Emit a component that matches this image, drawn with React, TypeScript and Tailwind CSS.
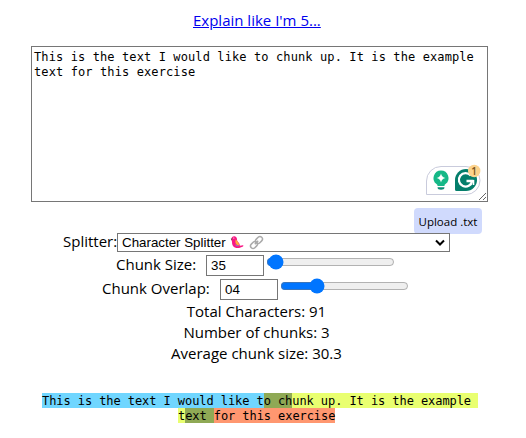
import React from 'react';

const ui = "font-['Open_Sans','Noto_Sans',sans-serif] text-[15px] whitespace-nowrap";
const mono = "font-['DejaVu_Sans_Mono',monospace]";

function Assistant() {
  return (
    <svg className="absolute left-[394px] top-[118px]" width="56" height="34" viewBox="0 0 56 34">
      <path d="M16 2.500h25a14 14 0 0 1 0 28H1.500V17A14.500 14.500 0 0 1 16 2.500z" fill="#fff" stroke="#c9cbdc" strokeWidth="1" />
      <path d="M16 6.500a7.500 7.500 0 0 1 4.500 13.500c-.8.600-1 1-1 2h-7c0-1-.2-1.400-1-2A7.500 7.500 0 0 1 16 6.500z" fill="#15b887" />
      <path d="M12.500 23.300h7c0 1.800-1.500 2.500-3.500 2.500s-3.500-.7-3.500-2.500z" fill="#0b8c75" />
      <path d="M16 9.500q.8 3.700 4.500 4.500-3.700.8-4.500 4.500-.8-3.700-4.500-4.500 3.700-.8 4.500-4.500z" fill="#fff" />
      <path d="M41 5a11 11 0 0 1 0 22H31.500a1.500 1.500 0 0 1-1.500-1.500V16A11 11 0 0 1 41 5z" fill="#047e6b" />
      <path d="M45.800 11.600A6.700 6.700 0 1 0 47.200 17H41.500" fill="none" stroke="#fff" strokeWidth="2.300" />
      <path d="M44.300 16.800h4.200v4.200" fill="none" stroke="#fff" strokeWidth="1.600" />
      <circle cx="49.200" cy="7" r="6.200" fill="#fbd28c" />
      <text x="49.200" y="10.600" textAnchor="middle" fontFamily="Open Sans" fontSize="10" fontWeight="600" fill="#77521c">1</text>
    </svg>
  );
}

function Parrot() {
  return (
    <svg width="14" height="15" viewBox="0 0 14 15">
      <path d="M1.500 4C1.500 2 2.800 1 4.500 1.200c2 .2 2.500 1.800 2.500 3.300 0 2 1.500 2.500 2.300 4 .4.800.5 1.500.5 2.300l3.200-.5c.5 0 .6.800 0 1.100-1.800 1-4.200 1.900-6.700 1.500C3.300 12.400 1.800 10 2 7z" fill="#f81784" />
      <path d="M5.800 4.200C7.300 6.500 9.200 7.800 9.300 10.300 7 10.600 4.300 8.500 5.800 4.200z" fill="#ffab38" />
      <path d="M5 8.900c1.200 1.100 2.400 1.600 4.200 1.500-.5.900-1.300 1.100-2.200.8-.9-.3-1.800-1-2-2.300z" fill="#6e9bc9" />
      <path d="M.8 3.400l1.700.2-1 2.100z" fill="#65484c" />
      <circle cx="3.800" cy="3" r=".6" fill="#fff" />
    </svg>
  );
}

function LinkIcon() {
  return (
    <svg width="15" height="15" viewBox="0 0 15 15" fill="none" stroke="#aaa" strokeWidth="1.500">
      <rect x="-3.800" y="-2.500" width="7.600" height="5" rx="2.500" transform="translate(5 10) rotate(-45)" />
      <rect x="-3.800" y="-2.500" width="7.600" height="5" rx="2.500" transform="translate(10 5) rotate(-45)" />
      <path d="M5.800 9.200l3.400-3.400" />
    </svg>
  );
}

function NumberBox({ value }: { value: string }) {
  return (
    <input
      defaultValue={value}
      className="h-[21px] w-[58px] border border-[#767676] bg-white px-1 font-['Liberation_Sans',Arial,sans-serif] text-[13.333px] text-black"
    />
  );
}

export default function App() {
  return (
    <div className="h-[438px] w-[526px] overflow-hidden bg-white text-black">
      <div className="flex h-[46px] pl-[193px] pt-[9px]">
        <a className={`${ui} h-[22px] leading-[22px] text-[#0000ee] underline`}>Explain like I'm 5...</a>
      </div>
      <div className="relative ml-[31px] h-[156px] w-[457px]">
        <textarea
          className={`${mono} block h-full w-full resize overflow-hidden border border-[#767676] bg-white px-[2px] pt-[3px] text-[12px] leading-[15px] tracking-[0.108px] text-black`}
          defaultValue="This is the text I would like to chunk up. It is the example text for this exercise"
        />
        <Assistant />
      </div>
      <div className="ml-[414px] mt-[6px] flex h-[26px] w-[68px] items-center justify-center rounded-[4px] bg-[#d0dafd] pt-px font-['Open_Sans',sans-serif] text-[11.500px] whitespace-nowrap">
        Upload .txt
      </div>
      <div className="relative -mt-px ml-[63px] flex h-[19px]">
        <span className={`${ui} w-[54px] leading-[17px]`}>Splitter:</span>
        <div className="flex h-[19px] w-[333px] items-center border border-[#767676] bg-white pl-1 font-['Liberation_Sans',Arial,sans-serif] text-[13.333px] whitespace-nowrap">
          <span className="w-[108px]">Character Splitter</span>
          <Parrot />
          <span className="w-[5px]" />
          <LinkIcon />
          <svg className="ml-auto mr-[4px]" width="10" height="8" viewBox="0 0 10 8">
            <path d="M1 1.500l4 4 4-4" fill="none" stroke="#000" strokeWidth="2" />
          </svg>
        </div>
      </div>
      <div className="ml-[116px] mt-[3px] flex h-[21px]">
        <span className={`${ui} w-[90px] leading-[19px]`}>Chunk Size:</span>
        <NumberBox value="35" />
        <input type="range" defaultValue={2} className="-mt-px ml-[2px] h-4 w-[129px]" />
      </div>
      <div className="ml-[102px] mt-[3px] flex h-[21px]">
        <span className={`${ui} w-[118px] leading-[19px]`}>Chunk Overlap:</span>
        <NumberBox value="04" />
        <input type="range" defaultValue={26} className="-mt-px ml-[2px] h-4 w-[129px]" />
      </div>
      <div className={`${ui} mt-px flex flex-col items-center pr-[13px] leading-[21px]`}>
        <span>Total Characters: 91</span>
        <span>Number of chunks: 3</span>
        <span>Average chunk size: 30.3</span>
      </div>
      <div className={`${mono} mt-[29px] flex flex-col pl-[42px] text-[12px] leading-[17px] tracking-[-0.075px] whitespace-pre`}>
        <div className="flex h-[15px]">
          <span className="bg-[#70d6ff]">This is the text I would like t</span>
          <span className="bg-[#8fa955]">o ch</span>
          <span className="bg-[#e9ff70]">unk up. It is the example </span>
        </div>
        <div className="ml-[136px] flex h-[15px]">
          <span className="h-[15px] bg-[#e9ff70]">t</span>
          <span className="h-[15px] bg-[#8fa955]">ext </span>
          <span className="h-[15px] bg-[#ff9770]">for this exercise</span>
        </div>
      </div>
    </div>
  );
}
